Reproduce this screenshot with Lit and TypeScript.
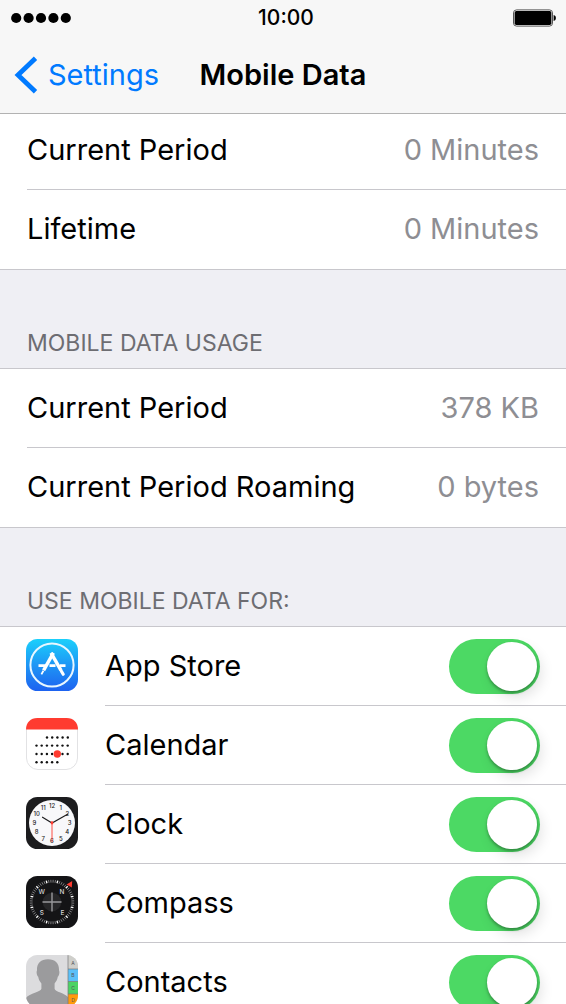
import { LitElement, html, svg, css, type TemplateResult } from "lit";
import { customElement, property } from "lit/decorators.js";

interface Usage {
  label: string;
  value: string;
}

interface App {
  name: string;
  icon: TemplateResult;
}

const polar = (cx: number, cy: number, r: number, deg: number) => {
  const a = ((deg - 90) * Math.PI) / 180;
  return [cx + r * Math.cos(a), cy + r * Math.sin(a)];
};

const appStoreIcon = html`<svg viewBox="0 0 52 52" aria-hidden="true">
  <defs>
    <linearGradient id="store" x1="0" y1="0" x2="0" y2="1">
      <stop offset="0" stop-color="#1bd0fb" />
      <stop offset="0.5" stop-color="#1e96f5" />
      <stop offset="1" stop-color="#1d62f0" />
    </linearGradient>
  </defs>
  <rect width="52" height="52" rx="11.5" fill="url(#store)" />
  <circle cx="26" cy="26" r="21.6" fill="none" stroke="#e9f7ff" stroke-width="2" />
  <g stroke="#fff" fill="none">
    <path d="M12.5 26.6H20M23.5 26.6H29.5M34 26.6H39.5" stroke-width="2.6" />
    <path d="M27.4 13.8 17.6 31.4" stroke-width="3.4" />
    <path d="M25 13.8 35 31.4" stroke-width="3.4" />
    <path d="M17.4 31.8 15.4 35.4" stroke-width="1.8" />
    <path d="M35.4 32.2 37.2 35.2" stroke-width="3.2" stroke-linecap="round" />
  </g>
</svg>`;

const calendarRows: Array<[number, number, number]> = [
  [19.5, 21, 5],
  [27.6, 10.5, 7],
  [36, 10.5, 7],
  [44.3, 10.5, 5],
];

const calendarIcon = html`<svg viewBox="0 0 52 52" aria-hidden="true">
  <rect x="0.5" y="0.5" width="51" height="51" rx="11.5" fill="#fff" stroke="#e2e2e4" />
  <path d="M0 11.5C0 4.5 4.5 0 11.5 0h29C47.5 0 52 4.5 52 11.5z" fill="#ff3b30" />
  ${calendarRows.map(([y, x, n]) =>
    Array.from({ length: n }, (_, i) => svg`<circle cx=${x + i * 5.2} cy=${y} r="1.2" fill="#111" />`)
  )}
  <circle cx="31.3" cy="36" r="3.7" fill="#ff3b30" />
</svg>`;

const clockIcon = html`<svg viewBox="0 0 52 52" aria-hidden="true">
  <rect width="52" height="52" rx="11.5" fill="#1c1c1e" />
  <circle cx="26" cy="26" r="23" fill="#f8f8fa" />
  <g font-family="Inter, sans-serif" font-size="6" font-weight="500" fill="#222" text-anchor="middle">
    ${Array.from({ length: 12 }, (_, i) => {
      const [x, y] = polar(26, 26, 17.7, (i + 1) * 30);
      return svg`<text x=${x} y=${y + 2.2}>${i + 1}</text>`;
    })}
  </g>
  <path d="M16.5 20.2 26 26 42 17" fill="none" stroke="#1c1c1e" stroke-width="1.1" stroke-linecap="round" />
  <path d="M26 24v21" stroke="#ff3b30" stroke-width="0.9" />
  <circle cx="26" cy="26" r="1.4" fill="#ff3b30" />
</svg>`;

const compassIcon = html`<svg viewBox="0 0 52 52" aria-hidden="true">
  <rect width="52" height="52" rx="11.5" fill="#141416" />
  ${Array.from({ length: 60 }, (_, i) => {
    const [x1, y1] = polar(26, 26, 19.4, i * 6 + 3);
    const [x2, y2] = polar(26, 26, 22.2, i * 6 + 3);
    return svg`<line x1=${x1} y1=${y1} x2=${x2} y2=${y2}
      stroke=${i % 5 === 2 ? "#fff" : "#98989a"} stroke-width=${i % 5 === 2 ? 1.3 : 0.8} />`;
  })}
  <circle cx="26" cy="26" r="9.3" fill="#262628" />
  <path d="M16.5 26h19M26 16.5v19" stroke="#98989b" stroke-width="1.4" />
  <path d="M40.6 8.6 46.2 5 45.8 11.4z" fill="#ff3b30" />
  <g font-family="Inter, sans-serif" font-size="6.4" font-weight="500" fill="#d8d8da" text-anchor="middle">
    <text x="15.7" y="17.8">W</text>
    <text x="36" y="17.8">N</text>
    <text x="15.7" y="38.6">S</text>
    <text x="36.4" y="38.6">E</text>
  </g>
</svg>`;

const contactsIcon = html`<svg viewBox="0 0 52 52" aria-hidden="true">
  <defs>
    <clipPath id="card"><rect width="52" height="52" rx="11.5" /></clipPath>
  </defs>
  <g clip-path="url(#card)">
    <rect width="52" height="52" fill="#dcdcde" />
    <path
      d="M22 4.2c-7.4 0-11.4 4.4-11 11.2-.8 1.2-.4 5 1.2 6.4.6 3.4 1.8 5 3.2 6.6v5.4c0 3-12 4.4-15.4 9.2V52h42.5v-9.2C39.2 38 28.6 36.8 28.6 33.8v-5.4c1.4-1.6 2.6-3.2 3.2-6.6 1.6-1.4 2-5.2 1.2-6.4C33.4 8.6 29.4 4.2 22 4.2z"
      fill="#9b9b9d"
    />
    <rect x="42" width="10" height="14" fill="#cfcfcb" />
    <rect x="42" y="14" width="10" height="12.5" fill="#5ac0f8" />
    <rect x="42" y="26.5" width="10" height="12.5" fill="#4cd364" />
    <rect x="42" y="39" width="10" height="13" fill="#ff9a0a" />
    <path d="M42 0v52M42 14h10M42 26.5h10M42 39h10" stroke="#77777a" stroke-width="0.7" />
    <g font-family="Inter, sans-serif" font-size="5" fill="#55555a" text-anchor="middle">
      <text x="47" y="10">A</text>
      <text x="47" y="22">B</text>
      <text x="47" y="34.5">C</text>
      <text x="47" y="46.5">D</text>
    </g>
  </g>
</svg>`;

@customElement("status-bar")
export class StatusBar extends LitElement {
  static styles = css`
    :host {
      display: grid;
      grid-template-columns: 1fr auto 1fr;
      align-items: center;
      height: 36px;
      padding: 0 10px;
    }
    .time {
      font-size: 21px;
      line-height: 24px;
      font-weight: 500;
      padding-left: 6px;
    }
    .signal,
    .battery {
      display: block;
    }
    .battery {
      justify-self: end;
    }
  `;

  render() {
    return html`
      <svg class="signal" width="62" height="12" viewBox="0 0 62 12" role="img" aria-label="Signal strength">
        ${[6.2, 18.6, 31, 43.4, 55.8].map((x) => svg`<circle cx=${x} cy="6" r="5.1" />`)}
      </svg>
      <time class="time">10:00</time>
      <svg class="battery" width="44" height="18" viewBox="0 0 44 18" role="img" aria-label="Battery full">
        <rect x="1.5" y="0.9" width="39" height="16.2" rx="3" fill="#f7f7f7" stroke="#555" stroke-width="1" />
        <rect x="2.6" y="2" width="36.8" height="14" rx="1.8" />
        <path d="M41.6 6c1.6.4 2.300 1.400 2.300 3s-.7 2.600-2.300 3z" />
      </svg>
    `;
  }
}

@customElement("usage-list")
export class UsageList extends LitElement {
  @property({ attribute: false }) items: Usage[] = [];

  static styles = css`
    :host {
      display: block;
    }
    .list {
      margin: 0;
      background: #fff;
      border-top: 1px solid #c8c7cc;
      border-bottom: 1px solid #c8c7cc;
    }
    .row {
      display: flex;
      justify-content: space-between;
      align-items: center;
      box-sizing: border-box;
      height: 79px;
      margin-left: 27px;
      padding-right: 27px;
      border-bottom: 1px solid #c8c7cc;
    }
    .row:last-child {
      border-bottom-color: transparent;
    }
    .value {
      margin: 0;
      color: #8e8e93;
    }
  `;

  render() {
    return html`<dl class="list">
      ${this.items.map(
        (item) => html`<div class="row">
          <dt>${item.label}</dt>
          <dd class="value">${item.value}</dd>
        </div>`
      )}
    </dl>`;
  }
}

@customElement("app-switch-list")
export class AppSwitchList extends LitElement {
  @property({ attribute: false }) apps: App[] = [];

  static styles = css`
    :host {
      display: block;
    }
    .list {
      margin: 0;
      padding: 0;
      list-style: none;
      background: #fff;
      border-top: 1px solid #c8c7cc;
    }
    .row {
      display: flex;
      padding-left: 26px;
      gap: 27px;
    }
    .icon {
      flex: none;
      width: 52px;
      height: 52px;
      padding-top: 12px;
    }
    .icon svg {
      display: block;
    }
    .body {
      flex: 1;
      display: flex;
      justify-content: space-between;
      align-items: center;
      box-sizing: border-box;
      height: 79px;
      padding-right: 26px;
      border-bottom: 1px solid #c8c7cc;
    }
    .switch {
      appearance: none;
      flex: none;
      display: flex;
      justify-content: flex-start;
      box-sizing: border-box;
      width: 91px;
      height: 55px;
      margin: 0;
      padding: 3px;
      border-radius: 28px;
      background: #e5e5ea;
    }
    .switch:checked {
      justify-content: flex-end;
      background: #4cd964;
    }
    .switch::before {
      content: "";
      width: 50px;
      height: 49px;
      border-radius: 50%;
      background: #fff;
      box-shadow: 0 2px 3px rgba(0, 0, 0, 0.3), 4px 6px 14px rgba(0, 0, 0, 0.12);
    }
  `;

  render() {
    return html`<ul class="list">
      ${this.apps.map(
        (app) => html`<li>
          <label class="row">
            <span class="icon">${app.icon}</span>
            <span class="body">
              <span>${app.name}</span>
              <input class="switch" type="checkbox" role="switch" checked />
            </span>
          </label>
        </li>`
      )}
    </ul>`;
  }
}

@customElement("app-root")
export class AppRoot extends LitElement {
  static styles = css`
    :host {
      display: flex;
      flex-direction: column;
      height: 100vh;
      overflow: hidden;
      background: #efeff4;
      color: #000;
      font: 400 29px/36px Inter, "Noto Sans", sans-serif;
    }
    .top {
      flex: none;
      background: #f7f7f7;
      border-bottom: 1px solid #b2b2b2;
    }
    .nav {
      display: grid;
      grid-template-columns: 1fr auto 1fr;
      align-items: center;
      height: 77px;
      padding: 0 14px;
    }
    .back {
      display: flex;
      align-items: center;
      gap: 10px;
      color: #007aff;
      text-decoration: none;
    }
    .title {
      margin: 0;
      font-size: 29px;
      font-weight: 600;
    }
    .content {
      flex: 1;
      min-height: 0;
      overflow: hidden;
    }
    .scrolled {
      margin-top: -4px;
    }
    .heading {
      display: flex;
      align-items: flex-end;
      box-sizing: border-box;
      height: 98px;
      margin: 0;
      padding: 0 27px 11px;
      color: #6d6d72;
      font-size: 23px;
      line-height: 28px;
      font-weight: 400;
    }
  `;

  private callTime: Usage[] = [
    { label: "Current Period", value: "0 Minutes" },
    { label: "Lifetime", value: "0 Minutes" },
  ];

  private dataUsage: Usage[] = [
    { label: "Current Period", value: "378 KB" },
    { label: "Current Period Roaming", value: "0 bytes" },
  ];

  private apps: App[] = [
    { name: "App Store", icon: appStoreIcon },
    { name: "Calendar", icon: calendarIcon },
    { name: "Clock", icon: clockIcon },
    { name: "Compass", icon: compassIcon },
    { name: "Contacts", icon: contactsIcon },
  ];

  render() {
    return html`
      <header class="top">
        <status-bar></status-bar>
        <nav class="nav">
          <a class="back" href="#settings">
            <svg width="24" height="38" viewBox="0 0 24 38" aria-hidden="true">
              <path d="M21.5 2.2 4 19 21.5 35.8" fill="none" stroke="#007aff" stroke-width="4.8" />
            </svg>
            <span>Settings</span>
          </a>
          <h1 class="title">Mobile Data</h1>
        </nav>
      </header>
      <main class="content">
        <usage-list class="scrolled" .items=${this.callTime}></usage-list>
        <h2 class="heading">MOBILE DATA USAGE</h2>
        <usage-list .items=${this.dataUsage}></usage-list>
        <h2 class="heading">USE MOBILE DATA FOR:</h2>
        <app-switch-list .apps=${this.apps}></app-switch-list>
      </main>
    `;
  }
}
